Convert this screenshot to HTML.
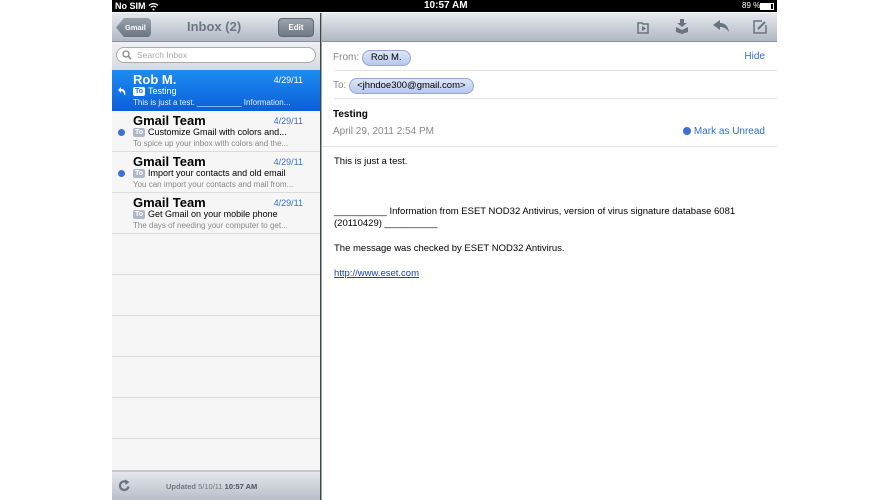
<!DOCTYPE html>
<html><head><meta charset="utf-8"><style>
*{margin:0;padding:0;box-sizing:border-box}
body{width:889px;height:500px;background:#fff;font-family:"Liberation Sans",sans-serif;position:relative;overflow:hidden}
.abs{position:absolute}
#status{left:112px;top:0;width:665px;height:12px;background:#000;color:#fff;font-size:9px;font-weight:bold}
#left{left:112px;top:13px;width:208px;height:487px;background:#f6f6f6}
#div{left:320px;top:13px;width:1px;height:487px;background:#444;box-shadow:1px 0 0 #9aa}
#right{left:322px;top:13px;width:455px;height:487px;background:#fff}
.nav{height:29px;background:linear-gradient(#e6e9ee,#b1b8c3);border-bottom:1px solid #8a919b}
.btn{position:absolute;top:5px;height:19px;border-radius:4px;background:linear-gradient(#9aa2ad,#6f7986);border:1px solid #5e6773;color:#fff;font-size:8px;font-weight:bold;text-align:center;line-height:17px}
.row{position:absolute;left:0;width:208px;height:41px;border-bottom:1px solid #dcdcdc}
.n{position:absolute;left:21px;top:2px;font-size:13px;font-weight:bold;color:#000}
.d{position:absolute;right:17px;top:5px;font-size:9px;color:#3a6fd0}
.s{position:absolute;left:21px;top:16px;font-size:9px;color:#000}
.p{position:absolute;left:21px;top:28px;font-size:8px;color:#888}
.to{display:inline-block;background:#b0b8c8;color:#fff;font-size:7px;font-weight:bold;padding:0 2px;border-radius:2px;margin-right:3px;line-height:9px;vertical-align:1px}
.dot{position:absolute;left:6px;top:18px;width:7px;height:7px;border-radius:50%;background:#3e6fd8}
.pill{display:inline-block;background:linear-gradient(#dde6f8,#b8c8ec);border:1px solid #93a6d6;border-radius:9px;padding:0 8px;font-size:9.5px;color:#000;line-height:14px}
.hr{position:absolute;left:0;width:455px;height:1px;background:#e3e3e3}
.body{font-size:9.5px;color:#000}
</style></head><body>
<div id="status" class="abs">
 <span class="abs" style="left:3px;top:1px">No SIM</span>
 <svg class="abs" style="left:36px;top:2px" width="11" height="9" viewBox="0 0 11 9"><path d="M1 3.5a6.5 6.5 0 0 1 9 0M2.8 5.3a4 4 0 0 1 5.4 0" stroke="#fff" stroke-width="1.3" fill="none"/><circle cx="5.5" cy="7.5" r="1" fill="#fff"/></svg>
 <span class="abs" style="left:312px;top:0px;font-size:10px">10:57 AM</span>
 <span class="abs" style="left:630px;top:1px;font-weight:normal;font-size:8px">89 %</span>
 <div class="abs" style="left:648px;top:3px;width:14px;height:7px;border:1px solid #fff"><div style="width:10px;height:5px;background:#fff"></div></div>
</div>
<div id="left" class="abs">
 <div class="nav" style="position:relative">
  <div class="abs" style="left:4px;top:5px;width:35px;height:19px;background:linear-gradient(#9aa2ad,#6a7482);clip-path:polygon(8px 0,100% 0,100% 100%,8px 100%,0 50%);border-radius:0 4px 4px 0;color:#fff;font-size:7.5px;font-weight:bold;line-height:19px;padding-left:9px">Gmail</div>
  <div class="abs" style="left:75px;top:6px;font-size:13px;font-weight:bold;color:#6c7686">Inbox (2)</div>
  <div class="btn" style="left:166px;width:36px">Edit</div>
 </div>
 <div class="abs" style="top:29px;left:0;width:208px;height:28px;background:linear-gradient(#f0f1f3,#d6d9de)">
  <div class="abs" style="left:4px;top:5px;width:200px;height:16px;border-radius:9px;background:#fff;border:1px solid #aaa;font-size:8.5px;color:#aaa;line-height:14px;padding-left:20px">Search Inbox</div>
  <svg class="abs" style="left:10px;top:8px" width="10" height="10" viewBox="0 0 10 10"><circle cx="4" cy="4" r="3" stroke="#888" stroke-width="1.3" fill="none"/><path d="M6.2 6.2L9 9" stroke="#888" stroke-width="1.5"/></svg>
 </div>
 <div class="row" style="top:57px;background:linear-gradient(#1d8cf2,#0a5fd9);border:none">
  <div class="n" style="color:#fff">Rob M.</div><div class="d" style="color:#fff">4/29/11</div>
  <svg class="abs" style="left:5px;top:16px" width="10" height="10" viewBox="0 0 10 10"><path d="M1 4L4 1V3C8 3 9 6 8 10 7 7 6 5 4 5V7Z" fill="#fff"/></svg>
  <div class="s" style="color:#fff"><span class="to" style="background:#fff;color:#1a70e0">To</span>Testing</div>
  <div class="p" style="color:#e6efff">This is just a test. __________ Information...</div>
 </div>
 <div class="row" style="top:98px"><div class="n">Gmail Team</div><div class="d">4/29/11</div><div class="dot"></div><div class="s"><span class="to">To</span>Customize Gmail with colors and...</div><div class="p">To spice up your inbox with colors and the...</div></div>
 <div class="row" style="top:139px"><div class="n">Gmail Team</div><div class="d">4/29/11</div><div class="dot"></div><div class="s"><span class="to">To</span>Import your contacts and old email</div><div class="p">You can import your contacts and mail from...</div></div>
 <div class="row" style="top:180px"><div class="n">Gmail Team</div><div class="d">4/29/11</div><div class="s"><span class="to">To</span>Get Gmail on your mobile phone</div><div class="p">The days of needing your computer to get...</div></div>
 <div class="row" style="top:221px"></div><div class="row" style="top:262px"></div><div class="row" style="top:303px"></div><div class="row" style="top:344px"></div><div class="row" style="top:385px"></div><div class="row" style="top:426px;height:33px;border-bottom:2px solid #c8c8c8"></div>
 <div class="abs" style="top:459px;left:0;width:208px;height:28px;background:linear-gradient(#e4e7ec,#b8bec8)">
  <svg class="abs" style="left:6px;top:7px" width="13" height="13" viewBox="0 0 13 13"><path d="M10.5 7.5A4.3 4.3 0 1 1 8.5 3" stroke="#6a7380" stroke-width="2.2" fill="none"/><path d="M7 0.5L11.5 3 7.5 6Z" fill="#6a7380"/></svg>
  <div class="abs" style="left:54px;top:10px;font-size:7.5px;color:#6f7885;font-weight:bold">Updated <span style="font-weight:normal">5/10/11</span> <span style="color:#4a5360">10:57 AM</span></div>
 </div>
</div>
<div id="div" class="abs"></div>
<div id="right" class="abs">
 <div class="nav" style="position:relative">
  <svg class="abs" style="left:315px;top:8px" width="12" height="13" viewBox="0 0 12 13"><path d="M1 2h4l1 1h5v9H1Z" fill="none" stroke="#6a7380" stroke-width="1.5"/><path d="M5 5l4 2.5L5 10Z" fill="#6a7380"/></svg>
  <svg class="abs" style="left:353px;top:6px" width="14" height="15" viewBox="0 0 14 15"><path d="M5 0h4v4h3L7 8 2 4h3Z" fill="#6a7380"/><path d="M1 8l6 3 6-3v5l-6 2-6-2Z" fill="#6a7380"/></svg>
  <svg class="abs" style="left:391px;top:7px" width="16" height="12" viewBox="0 0 16 12"><path d="M0 5L7 0V3C12 3 15 6 16 12 13 8 10 7 7 7V10Z" fill="#6a7380"/></svg>
  <svg class="abs" style="left:431px;top:7px" width="14" height="14" viewBox="0 0 14 14"><path d="M9 1H1V13H13V5" fill="none" stroke="#6a7380" stroke-width="1.5"/><path d="M5 9L12 2" stroke="#6a7380" stroke-width="2"/></svg>
 </div>
 <div class="abs" style="left:11px;top:37px;font-size:10px;color:#888">From: <span class="pill">Rob M.</span></div>
 <div class="abs" style="right:12px;top:38px;font-size:10px;color:#2f6fd0">Hide</div>
 <div class="hr" style="top:57px;left:12px;width:443px"></div>
 <div class="abs" style="left:11px;top:65px;font-size:10px;color:#888">To: <span class="pill" style="padding:0 7px">&lt;jhndoe300@gmail.com&gt;</span></div>
 <div class="hr" style="top:85px;left:12px;width:443px"></div>
 <div class="abs" style="left:11px;top:96px;font-size:10px;font-weight:bold">Testing</div>
 <div class="abs" style="left:11px;top:113px;font-size:10px;color:#888">April 29, 2011 2:54 PM</div>
 <div class="abs" style="right:12px;top:113px;font-size:10px;color:#2f6fd0"><span style="display:inline-block;width:8px;height:8px;border-radius:50%;background:#3e6fd8;vertical-align:-1px"></span> Mark as Unread</div>
 <div class="hr" style="top:133px;left:0px"></div>
 <div class="abs body" style="left:12px;top:143px">This is just a test.</div>
 <div class="abs body" style="left:12px;top:193px">__________ Information from ESET NOD32 Antivirus, version of virus signature database 6081</div>
 <div class="abs body" style="left:12px;top:205px">(20110429) __________</div>
 <div class="abs body" style="left:12px;top:230px">The message was checked by ESET NOD32 Antivirus.</div>
 <div class="abs body" style="left:12px;top:255px;color:#1a3fd0;text-decoration:underline">http://www.eset.com</div>
</div>
</body></html>
